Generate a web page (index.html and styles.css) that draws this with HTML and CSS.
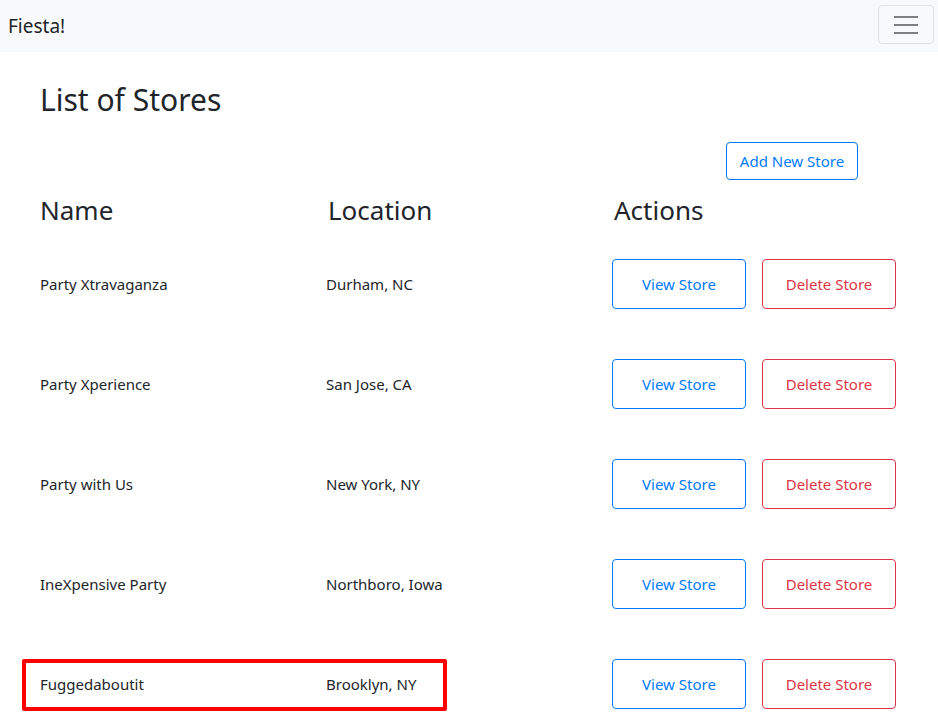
FILE: index.html
```html
<!DOCTYPE html>
<html lang="en">
<head>
<meta charset="utf-8">
<title>Fiesta!</title>
<link rel="stylesheet" href="styles.css">
</head>
<body>
<nav class="navbar">
  <span class="brand">Fiesta!</span>
  <button class="toggler" aria-label="Toggle navigation">
    <svg width="24" height="24" viewBox="0 0 24 24"><path d="M0 5h24M0 13h24M0 21h24" stroke="#7f7f7f" stroke-width="2" fill="none"/></svg>
  </button>
</nav>
<main class="page">
  <h1 class="title">List of Stores</h1>
  <div class="toolbar">
    <button class="btn btn-blue btn-add">Add New Store</button>
  </div>
  <div class="stores">
    <div class="row head">
      <h3 class="cell">Name</h3>
      <h3 class="cell">Location</h3>
      <h3 class="cell">Actions</h3>
    </div>
    <div class="row">
      <div class="cell">Party Xtravaganza</div>
      <div class="cell">Durham, NC</div>
      <div class="cell actions"><button class="btn btn-blue btn-lg">View Store</button><button class="btn btn-red btn-lg">Delete Store</button></div>
    </div>
    <div class="row">
      <div class="cell">Party Xperience</div>
      <div class="cell">San Jose, CA</div>
      <div class="cell actions"><button class="btn btn-blue btn-lg">View Store</button><button class="btn btn-red btn-lg">Delete Store</button></div>
    </div>
    <div class="row">
      <div class="cell">Party with Us</div>
      <div class="cell">New York, NY</div>
      <div class="cell actions"><button class="btn btn-blue btn-lg">View Store</button><button class="btn btn-red btn-lg">Delete Store</button></div>
    </div>
    <div class="row">
      <div class="cell">IneXpensive Party</div>
      <div class="cell">Northboro, Iowa</div>
      <div class="cell actions"><button class="btn btn-blue btn-lg">View Store</button><button class="btn btn-red btn-lg">Delete Store</button></div>
    </div>
    <div class="row">
      <div class="cell">Fuggedaboutit</div>
      <div class="cell">Brooklyn, NY</div>
      <div class="cell actions"><button class="btn btn-blue btn-lg">View Store</button><button class="btn btn-red btn-lg">Delete Store</button></div>
    </div>
  </div>
  <div class="highlight"></div>
</main>
</body>
</html>
```

FILE: styles.css
```css
* { box-sizing: border-box; }
html, body { margin: 0; padding: 0; }
body {
  font-family: "Noto Sans", "Open Sans", sans-serif;
  font-size: 15px;
  color: #212529;
  background: #fff;
  width: 938px;
  height: 721px;
  overflow: hidden;
}
.navbar {
  height: 52px;
  background: #f8f9fa;
  display: flex;
  align-items: center;
  justify-content: space-between;
  padding: 0 4px 0 8px;
}
.brand { font-size: 19px; color: #212529; }
.toggler {
  width: 56px;
  height: 39px;
  margin-top: -4px;
  border: 1px solid rgba(0,0,0,.1);
  border-radius: 4px;
  background: transparent;
  display: flex;
  align-items: center;
  justify-content: center;
  padding: 0;
}
.page {
  position: relative;
  padding: 0 40px;
}
.title {
  margin: 0;
  padding-top: 28px;
  font-size: 30px;
  font-weight: 400;
  line-height: 40px;
}
.toolbar {
  display: flex;
  justify-content: flex-end;
  padding-right: 40px;
  margin-top: 22px;
}
.btn {
  font-family: inherit;
  font-size: 15px;
  background: #fff;
  border: 1px solid;
  border-radius: 4px;
  cursor: pointer;
}
.btn-blue { color: #007bff; border-color: #007bff; }
.btn-red { color: #dc3545; border-color: #dc3545; }
.btn-add { width: 132px; height: 38px; padding: 0; }
.btn-lg { width: 134px; height: 50px; padding: 0; }
.stores { margin-top: 10px; }
.row {
  display: grid;
  grid-template-columns: 286px 286px 286px;
  height: 100px;
  align-items: center;
}
.row.head { height: 40px; margin-bottom: 4px; }
.head .cell {
  margin: 0;
  font-size: 26px;
  font-weight: 400;
  line-height: 40px;
}
.head .cell:nth-child(2), .head .cell:nth-child(3) { padding-left: 2px; }
.actions { display: flex; gap: 16px; }
.highlight {
  position: absolute;
  left: 22px;
  top: 607px;
  width: 425px;
  height: 52px;
  border: 4px solid #ff0000;
  border-radius: 2px;
  pointer-events: none;
}
```
